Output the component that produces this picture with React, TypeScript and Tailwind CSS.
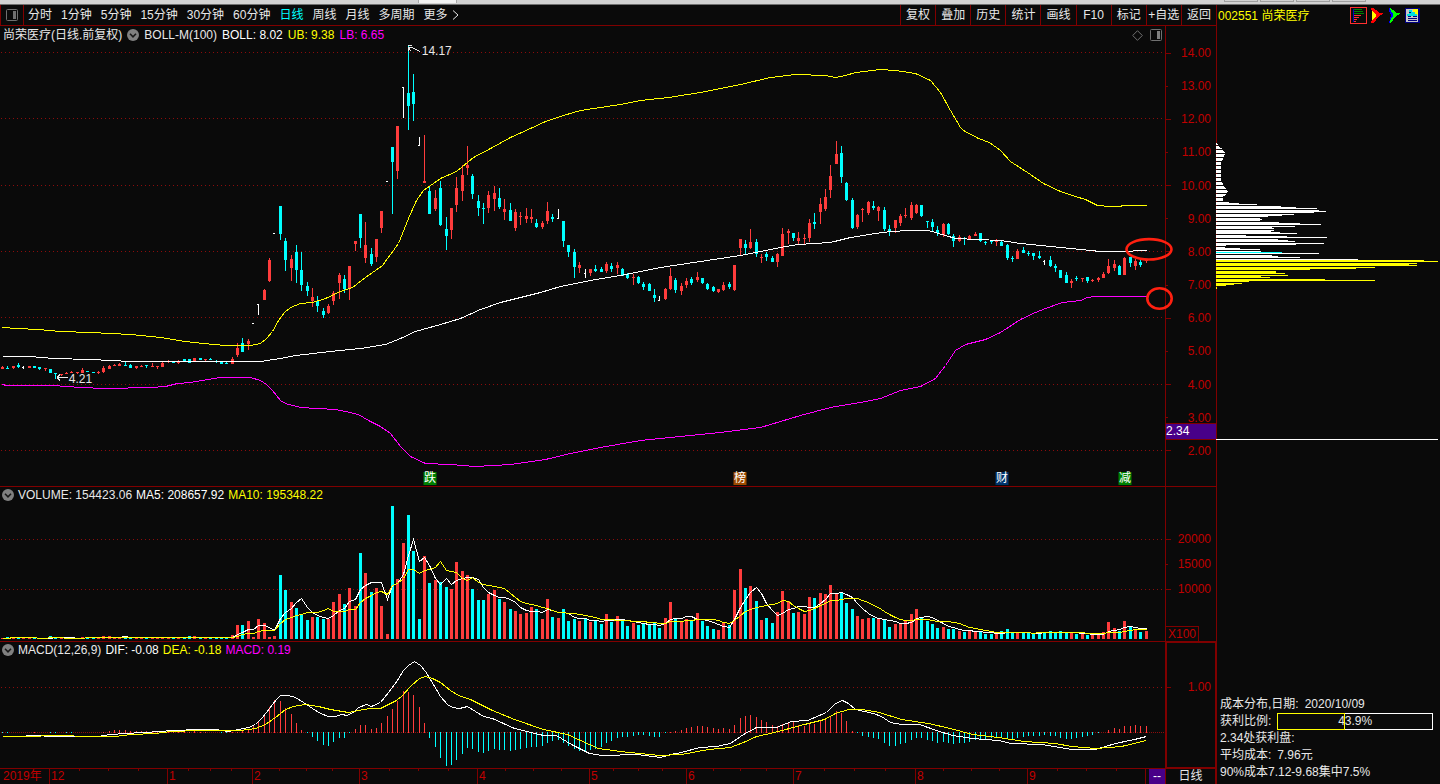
import type { ReactNode } from "react";

type Kind = "r" | "c" | "w" | "v"; // up, down, flat on rising / falling volume
type Candle = [number, number, number, number, Kind];

const RED = "#ff3c3c";
const CYAN = "#00ffff";
const YELLOW = "#ffff00";
const MAGENTA = "#ff00ff";
const WHITE = "#ffffff";
const LINE = "#800000";

// high, body top, body bottom, low, kind (chart units)
const candles: Candle[] = [
  [366, 367, 369, 369, "r"], [366, 368, 369, 369, "c"], [366, 366, 368, 369, "r"], [363, 365, 367, 368, "c"], [366, 367, 368, 369, "w"],
  [366, 366, 368, 368, "r"], [366, 366, 368, 368, "c"], [367, 367, 369, 370, "c"], [368, 368, 369, 371, "r"], [369, 369, 373, 373, "c"],
  [373, 373, 374, 379, "c"], [374, 374, 375, 376, "r"], [372, 373, 374, 374, "r"], [371, 372, 373, 373, "r"], [372, 372, 373, 374, "r"],
  [368, 370, 373, 373, "r"], [371, 371, 372, 372, "c"], [372, 372, 373, 373, "c"], [371, 372, 373, 374, "r"], [366, 368, 372, 373, "r"],
  [365, 366, 369, 369, "r"], [364, 365, 366, 366, "r"], [363, 364, 366, 366, "r"], [362, 365, 366, 366, "c"], [364, 365, 368, 368, "c"],
  [366, 366, 368, 369, "r"], [365, 366, 367, 367, "r"], [365, 365, 366, 368, "c"], [363, 366, 367, 367, "r"], [366, 366, 367, 369, "r"],
  [362, 363, 367, 367, "r"], [360, 361, 362, 363, "r"], [361, 362, 363, 363, "c"], [360, 361, 363, 364, "r"], [359, 359, 361, 361, "c"],
  [359, 359, 363, 363, "c"], [358, 358, 361, 361, "r"], [358, 358, 360, 360, "c"], [359, 359, 360, 361, "r"], [358, 359, 360, 360, "c"],
  [360, 361, 362, 363, "c"], [361, 362, 364, 364, "c"], [362, 363, 364, 364, "c"], [357, 359, 364, 364, "r"], [343, 348, 355, 357, "r"],
  [338, 343, 352, 352, "c"], [339, 341, 344, 350, "r"], [323, 323, 324, 324, "w"], [304, 304, 315, 315, "w"], [289, 290, 300, 300, "r"],
  [258, 260, 281, 282, "r"], [233, 233, 234, 234, "w"], [206, 206, 234, 240, "c"], [238, 241, 260, 271, "c"], [255, 259, 268, 281, "r"],
  [245, 252, 270, 283, "c"], [252, 270, 285, 291, "c"], [282, 286, 291, 296, "c"], [288, 297, 301, 307, "r"], [296, 301, 306, 312, "c"],
  [308, 311, 315, 318, "c"], [304, 306, 313, 314, "r"], [291, 293, 301, 305, "r"], [273, 275, 283, 299, "r"], [275, 279, 289, 293, "c"],
  [266, 266, 289, 300, "r"], [241, 241, 244, 251, "r"], [214, 214, 238, 248, "c"], [222, 245, 258, 263, "r"], [248, 254, 264, 266, "c"],
  [239, 239, 257, 262, "r"], [211, 211, 228, 233, "r"], [181, 181, 182, 182, "w"], [147, 147, 162, 214, "c"], [126, 126, 171, 179, "r"],
  [87, 87, 118, 118, "w"], [46, 93, 106, 130, "c"], [74, 92, 104, 121, "c"], [137, 145, 146, 146, "v"], [135, 181, 183, 183, "r"],
  [186, 191, 214, 214, "c"], [190, 198, 209, 211, "r"], [181, 188, 225, 226, "c"], [217, 229, 236, 250, "c"], [208, 208, 230, 239, "r"],
  [177, 188, 205, 212, "r"], [165, 175, 191, 201, "r"], [146, 165, 168, 175, "r"], [174, 176, 194, 199, "c"], [195, 201, 208, 216, "c"],
  [203, 208, 209, 224, "c"], [191, 195, 208, 213, "r"], [186, 193, 199, 211, "r"], [188, 198, 207, 209, "c"], [199, 209, 212, 220, "r"],
  [203, 210, 221, 221, "c"], [209, 212, 228, 231, "r"], [212, 216, 217, 225, "r"], [208, 216, 219, 223, "r"], [209, 217, 219, 223, "r"],
  [219, 223, 227, 228, "c"], [221, 223, 227, 229, "r"], [202, 211, 221, 224, "r"], [214, 217, 219, 222, "c"], [209, 218, 219, 219, "w"],
  [221, 221, 241, 247, "c"], [245, 245, 252, 257, "c"], [249, 252, 267, 278, "c"], [262, 265, 268, 273, "r"], [269, 273, 274, 278, "v"],
  [269, 269, 273, 276, "r"], [265, 269, 271, 272, "c"], [267, 269, 272, 272, "c"], [262, 264, 271, 273, "r"], [263, 266, 269, 272, "c"],
  [262, 265, 268, 274, "r"], [268, 269, 276, 276, "c"], [273, 274, 278, 279, "c"], [274, 277, 278, 285, "r"], [276, 277, 283, 284, "c"],
  [282, 284, 287, 290, "c"], [283, 284, 291, 291, "c"], [289, 295, 298, 302, "c"], [296, 300, 301, 301, "v"], [288, 289, 299, 300, "r"],
  [268, 276, 289, 290, "r"], [278, 280, 290, 293, "c"], [283, 286, 291, 295, "r"], [278, 281, 285, 288, "r"], [277, 279, 283, 285, "c"],
  [272, 277, 280, 282, "r"], [278, 278, 283, 284, "c"], [283, 284, 289, 290, "c"], [286, 287, 291, 292, "c"], [289, 289, 292, 293, "r"],
  [282, 285, 290, 291, "r"], [282, 284, 287, 289, "c"], [265, 265, 290, 291, "r"], [239, 239, 248, 256, "r"], [240, 244, 248, 255, "c"],
  [229, 242, 248, 249, "r"], [239, 242, 254, 257, "c"], [254, 257, 258, 263, "r"], [252, 254, 257, 261, "c"], [256, 258, 262, 262, "c"],
  [253, 254, 262, 267, "r"], [228, 234, 256, 256, "r"], [229, 231, 233, 244, "r"], [233, 233, 238, 241, "c"], [232, 238, 241, 244, "r"],
  [234, 238, 239, 244, "r"], [219, 223, 238, 242, "r"], [213, 222, 224, 229, "c"], [198, 204, 212, 224, "r"], [189, 197, 209, 211, "r"],
  [165, 176, 190, 198, "r"], [141, 154, 164, 164, "r"], [146, 153, 177, 183, "c"], [182, 183, 200, 201, "c"], [198, 200, 228, 229, "c"],
  [214, 215, 227, 229, "r"], [208, 209, 210, 222, "r"], [201, 202, 213, 215, "r"], [201, 206, 208, 210, "c"], [206, 207, 211, 221, "r"],
  [207, 210, 229, 231, "c"], [225, 229, 232, 236, "c"], [220, 220, 228, 233, "r"], [214, 216, 223, 226, "r"], [208, 215, 216, 218, "r"],
  [202, 205, 218, 220, "r"], [204, 205, 213, 214, "r"], [205, 205, 216, 217, "c"], [221, 221, 222, 228, "c"], [219, 222, 227, 231, "c"],
  [226, 230, 233, 236, "c"], [223, 224, 235, 237, "r"], [223, 224, 234, 235, "c"], [234, 236, 241, 247, "c"], [235, 237, 241, 242, "r"],
  [237, 238, 239, 245, "c"], [235, 236, 239, 240, "r"], [232, 234, 236, 236, "r"], [233, 233, 241, 242, "c"], [241, 242, 243, 245, "c"],
  [240, 241, 242, 244, "c"], [239, 240, 242, 246, "r"], [241, 242, 246, 246, "c"], [244, 245, 258, 260, "c"], [256, 258, 259, 262, "c"],
  [249, 251, 259, 259, "r"], [247, 250, 253, 253, "c"], [251, 253, 254, 256, "c"], [253, 253, 256, 260, "c"], [251, 256, 258, 259, "c"],
  [260, 261, 262, 265, "v"], [256, 260, 266, 267, "c"], [264, 266, 268, 272, "c"], [270, 270, 278, 278, "c"], [272, 275, 283, 283, "c"],
  [279, 281, 283, 288, "r"], [276, 278, 279, 281, "c"], [278, 278, 279, 282, "r"], [277, 277, 281, 283, "c"], [279, 280, 281, 282, "r"],
  [277, 278, 280, 282, "r"], [272, 274, 278, 278, "r"], [259, 266, 273, 274, "r"], [260, 264, 268, 271, "r"], [265, 266, 275, 275, "c"],
  [257, 258, 275, 275, "r"], [257, 257, 263, 267, "c"], [259, 261, 266, 270, "r"], [259, 262, 265, 267, "c"], [260, 260, 261, 263, "r"],
];

const volumes = [
  1, 2, 2, 2, 2, 1, 1, 1, 1, 3, 2, 1, 1, 2, 1, 2, 2, 1, 2, 3, 3, 2, 2, 3, 2, 1, 2, 1, 2, 2,
  2, 2, 1, 2, 2, 3, 3, 2, 2, 1, 2, 2, 2, 4, 14, 14, 18, 2, 20, 16, 2, 3, 64, 49, 37, 31, 25, 19, 22, 22,
  20, 20, 37, 45, 35, 51, 33, 86, 66, 47, 51, 33, 5, 133, 60, 96, 124, 88, 20, 83, 56, 59, 57, 52, 50, 77, 68, 64, 50, 39,
  39, 45, 49, 40, 37, 30, 28, 25, 26, 32, 30, 20, 40, 22, 21, 30, 18, 20, 18, 20, 17, 19, 15, 25, 17, 23, 19, 13, 16, 14,
  16, 15, 16, 11, 21, 37, 21, 17, 20, 18, 26, 18, 13, 10, 9, 16, 14, 49, 70, 51, 53, 38, 19, 21, 16, 27, 48, 38, 26, 27,
  25, 42, 41, 46, 45, 54, 46, 46, 36, 30, 23, 20, 21, 21, 20, 20, 12, 15, 15, 19, 25, 30, 22, 18, 15, 11, 12, 10, 10, 8,
  7, 8, 7, 8, 5, 5, 6, 8, 10, 6, 6, 7, 6, 6, 7, 7, 8, 7, 8, 7, 7, 5, 5, 4, 5, 5, 7, 17, 11, 8, 18, 12, 10, 7, 8,
];

const histogram = [
  -1, -1, 0, 0, 0, 0, 1, 0, 0, -1, -1, 0, -1, -1, 0, 0, 0, 0, 0, 1, 2, 3, 3, 3, 2, 2, 2, 2, 2, 1,
  2, 2, 1, 1, 1, 1, 2, 1, 1, 0, 0, -1, -1, 1, 1, 2, 3, 7, 12, 19, 26, 33, 32, 25, 19, 10, 3, -1, -5, -9,
  -13, -14, -10, -6, -6, -1, 4, 8, 8, 4, 5, 10, 17, 24, 32, 42, 41, 38, 26, 10, -6, -15, -26, -34, -33, -28, -22, -16, -17, -20,
  -21, -19, -17, -18, -18, -19, -18, -17, -16, -15, -15, -14, -11, -9, -8, -11, -14, -17, -19, -19, -18, -17, -15, -11, -9, -6, -5, -5, -4, -3,
  -3, -4, -5, -5, -1, 1, 2, 3, 5, 6, 7, 7, 6, 5, 4, 5, 4, 8, 15, 17, 18, 16, 13, 11, 8, 7, 9, 10, 11, 8,
  7, 9, 9, 12, 13, 17, 22, 20, 12, 2, -1, -4, -5, -6, -7, -11, -14, -14, -12, -11, -8, -6, -6, -8, -9, -11, -10, -11, -12, -11,
  -11, -10, -8, -8, -7, -6, -6, -5, -7, -8, -6, -5, -4, -4, -4, -3, -4, -4, -6, -7, -7, -6, -5, -4, -3, -1, 0, 3, 5, 4, 7, 7, 8, 7, 7,
];

const upperBand =
  "2,327 16,328 38,329 60,331 90,332 130,334 160,337 185,341 203,343 225,345 250,345 260,343 266,338 272,331 278,320 284,312 290,307 300,303 312,302 325,298 340,291 352,287 365,277 382,265 398,243 408,218 416,200 423,190 440,178 456,171 473,157 490,148 510,137 530,128 545,121 563,115 580,110 600,107 620,104 640,100 668,97 700,92 740,84 770,77 795,74 825,75 835,77 845,75 855,72 880,69 895,70 915,73 930,80 940,92 950,110 960,127 963,130 978,138 989,142 1000,150 1010,161 1030,174 1043,183 1060,191 1075,196 1085,199 1097,205 1110,206 1120,206 1122,205 1146,205";
const midBand =
  "2,356 30,356 53,358 90,359 130,361 260,361 280,358 295,355 330,351 360,348 385,344 400,338 415,331 440,324 460,318 480,309 500,302 512,299 540,292 560,286 590,280 620,275 660,267 700,261 740,255 760,251 780,247 797,244 830,242 850,237 875,233 890,231 910,230 928,230 945,235 955,238 1000,240 1020,243 1060,247 1100,251 1130,251 1135,250 1146,250";
const lowerBand =
  "2,384 6,385 52,385 80,387 105,388 150,387 165,386 177,383 190,382 207,379 220,377 250,377 260,380 266,384 272,390 280,400 285,403 300,407 335,409 345,411 358,414 368,420 380,426 390,433 400,446 410,456 425,463 450,464 475,466 510,464 545,459 570,453 600,447 640,440 680,436 720,432 760,427 800,415 830,407 860,402 880,398 900,390 920,386 935,378 945,365 955,350 965,344 985,339 1000,332 1020,319 1035,312 1045,308 1062,302 1080,300 1087,297 1095,296 1146,296";
const dif =
  "2,736 20,736 32,735 55,736 97,736 110,734 125,733 160,731 172,730 200,729 215,729 228,731 238,729 248,727 255,724 262,717 269,708 276,699 280,695 288,695 295,697 303,702 312,708 320,713 328,716 335,716 341,714 347,715 354,711 358,707 366,704 371,706 380,702 388,692 397,680 403,670 408,665 414,661 420,665 425,671 433,684 440,696 447,704 452,707 459,708 467,706 475,711 483,716 492,718 514,728 543,735 556,735 571,744 589,753 602,755 637,754 660,757 670,754 681,752 699,747 716,746 730,743 743,734 756,727 776,727 791,721 807,720 826,712 835,703 842,700 848,703 855,709 873,713 881,716 890,722 901,724 919,724 936,730 952,735 972,738 998,740 1011,743 1042,744 1071,749 1095,749 1115,743 1134,739 1146,736";
const dea =
  "2,736 32,736 50,735 97,736 115,736 130,734 155,733 170,731 200,730 240,730 255,728 265,724 275,717 285,709 293,706 305,704 318,706 330,709 348,712 358,710 370,708 380,708 388,704 396,700 402,695 410,686 419,678 425,676 432,678 440,682 450,690 458,695 470,699 492,710 514,719 543,729 567,734 580,740 598,748 620,751 659,755 681,754 708,749 730,747 743,742 756,736 774,732 800,725 824,719 835,713 848,709 862,709 879,712 901,719 928,723 950,728 972,734 998,737 1024,741 1055,743 1071,746 1095,748 1121,746 1146,740";

// first row, then widths of the consecutive rows
const chipRows: [number, number[]][] = [
  [143, [1, 2]], [146, [3, 4, 6]], [150, [7, 8, 9]], [154, [9, 8, 8]], [158, [7, 7, 6]], [162, [5, 5, 5]], [166, [5, 5, 5]],
  [170, [5, 5, 5]], [174, [5, 5, 5]], [178, [5, 5, 5]], [182, [6, 7, 7]], [186, [8, 9, 10]], [190, [11, 12, 11]], [194, [10, 9, 7]],
  [198, [7, 7, 7]], [202, [13, 23, 41]], [206, [65, 80, 101]], [210, [103, 110, 98]], [214, [78, 66, 52]], [218, [44, 46, 44]],
  [222, [63, 84, 105]], [226, [79, 56, 58]], [230, [58, 55, 64, 81]], [235, [30, 71, 111]], [239, [62, 72, 79]], [243, [108, 80, 10]],
  [247, [9, 24, 44]], [251, [45, 66, 103]], [255, [56, 62, 84]], [259, [142, 208, 222]], [263, [201, 193, 201]], [267, [159, 140, 94]],
  [271, [60, 60, 69]], [275, [72, 45, 54]], [279, [109, 159, 33]], [283, [26, 18, 10]], [287, [1, 1]],
];

const periods = ["分时", "1分钟", "5分钟", "15分钟", "30分钟", "60分钟", "日线", "周线", "月线", "多周期"];
const tools = ["复权", "叠加", "历史", "统计", "画线", "F10", "标记", "+自选", "返回"];
const prices = ["14.00", "13.00", "12.00", "11.00", "10.00", "9.00", "8.00", "7.00", "6.00", "5.00", "4.00", "3.00", "2.00"];
const months = ["12", "1", "2", "3", "4", "5", "6", "7", "8", "9"];
const gridRows = [52, 118, 185, 251, 317, 384, 450];

const tags = [
  { text: "跌", x: 430, className: "bg-[#008000]" },
  { text: "榜", x: 740, className: "bg-[#9c4a00]" },
  { text: "财", x: 1002, className: "bg-[#00346c]" },
  { text: "减", x: 1125, className: "bg-[#008000]" },
];

const barX = (i: number) => Math.round(1.9 + i * 5.345);

function movingAverage(size: number) {
  return volumes
    .map((_, i) => {
      const part = volumes.slice(Math.max(0, i - size + 1), i + 1);
      const mean = part.reduce((a, b) => a + b, 0) / part.length;
      return `${barX(i)},${Math.round(639 - mean)}`;
    })
    .join(" ");
}

function Plot({ top, height, children }: { top: number; height: number; children: ReactNode }) {
  return (
    <svg
      className="block min-h-0 w-full flex-1"
      viewBox={`0 ${top} 1165 ${height}`}
      preserveAspectRatio="none"
      shapeRendering="crispEdges"
      aria-hidden="true"
    >
      {children}
    </svg>
  );
}

function Dotted({ y, step = 4 }: { y: number; step?: number }) {
  return <path d={`M1 ${y + 0.5}H1165`} stroke="#8c0c0c" strokeDasharray={`1 ${step - 1}`} />;
}

function Curve({ points, color }: { points: string; color: string }) {
  return <polyline points={points} transform="translate(0.5 0.5)" fill="none" stroke={color} />;
}

function Collapse({ label }: { label: string }) {
  return (
    <button type="button" aria-label={label} className="flex size-3 items-center justify-center rounded-full bg-[#808080]">
      <svg viewBox="0 0 12 12" className="size-3" fill="none" stroke="#181818" strokeWidth="1.6">
        <path d="M3 4.8l3 3 3-3" />
      </svg>
    </button>
  );
}

function Candles() {
  return (
    <g>
      {candles.map(([high, top, bottom, low, kind], i) => {
        const x = barX(i);
        if (kind === "w" || kind === "v") {
          return (
            <g key={i} fill={WHITE}>
              <rect x={x} y={high} width={1} height={low - high} />
              <rect x={x - 1} y={top} width={1} height={1} />
            </g>
          );
        }
        return (
          <g key={i} fill={kind === "r" ? RED : CYAN}>
            <rect x={x} y={high} width={1} height={low - high} />
            <rect x={x - 1} y={top} width={3} height={bottom - top} />
          </g>
        );
      })}
    </g>
  );
}

function Toolbar() {
  return (
    <header className="flex h-[21px] shrink-0 items-stretch border-b border-[#800000] leading-5">
      <button type="button" aria-label="侧栏" className="flex w-6 items-center justify-center border-x border-[#800000]">
        <svg viewBox="0 0 12 12" className="size-3" fill="none" stroke="#707070">
          <rect x="0.5" y="0.5" width="11" height="11" rx="1" />
          <path d="M7 2h3v8H7z" fill="#707070" stroke="none" />
        </svg>
      </button>
      <nav className="ml-1 flex gap-[9px]">
        {periods.map((name) => (
          <button key={name} type="button" className={name === "日线" ? "text-[#00ffff]" : ""}>
            {name}
          </button>
        ))}
        <button type="button" className="flex items-center gap-1">
          更多
          <svg viewBox="0 0 7 12" className="h-3 w-[7px]" fill="none" stroke="#e8e8e8">
            <path d="M1 1.5L6 6l-5 4.5" />
          </svg>
        </button>
      </nav>
      <div className="ml-auto grid w-[316px] grid-cols-9">
        {tools.map((name) => (
          <button key={name} type="button" className="border-l border-[#800000] text-center whitespace-nowrap">
            {name}
          </button>
        ))}
      </div>
    </header>
  );
}

function PricePanel() {
  return (
    <section className="relative flex min-h-0 flex-[460_1_0px] border-b border-[#800000]">
      <div className="relative flex min-w-0 flex-1 flex-col">
        <div className="flex h-[18px] shrink-0 items-center gap-[5px] pr-[3px] pl-[3px]">
          <h1>尚荣医疗(日线.前复权)</h1>
          <Collapse label="主图指标" />
          <span>BOLL-M(100)</span>
          <span className="text-white">BOLL: 8.02</span>
          <span className="text-[#ffff00]">UB: 9.38</span>
          <span className="text-[#ff00ff]">LB: 6.65</span>
          <button type="button" aria-label="标注" className="ml-auto">
            <svg viewBox="0 0 11 11" className="size-[11px]" fill="none" stroke="#707070">
              <path d="M5.5 0.7l4.8 4.8-4.8 4.8L0.7 5.5z" />
            </svg>
          </button>
          <button type="button" aria-label="窗口" className="ml-[2px]">
            <svg viewBox="0 0 12 12" className="size-3" fill="none" stroke="#707070">
              <rect x="0.5" y="0.5" width="11" height="11" rx="1" />
              <path d="M7 2h3v8H7z" fill="#808080" stroke="none" />
            </svg>
          </button>
        </div>
        <Plot top={44} height={442}>
          {gridRows.map((y) => (
            <Dotted key={y} y={y} />
          ))}
          <Candles />
          <Curve points={upperBand} color={YELLOW} />
          <Curve points={midBand} color={WHITE} />
          <Curve points={lowerBand} color={MAGENTA} />
          <g fill="none" stroke="#e8e8e8">
            <path d="M408.5 50.5V46.5M408 45.5H412M408 47.5H412L416 49.5L420 51.5M408.5 48L411 51" />
            <path d="M57 377.5H68M57 377.5L60 374.5M57 377.5L60 380.5" />
          </g>
        </Plot>
        {/* price callouts and event tags sit on the canvas */}
        <span className="absolute top-[4.2%] left-[36.2%] leading-none">14.17</span>
        <span className="absolute top-[75.4%] left-[5.9%] leading-none">4.21</span>
        {tags.map((tag) => (
          <a
            key={tag.x}
            href={`#event-${tag.x}`}
            className={`absolute bottom-px w-[13px] -translate-x-1/2 text-center leading-[13px] text-white ${tag.className}`}
            style={{ left: `${(tag.x / 1165) * 100}%` }}
          >
            {tag.text}
          </a>
        ))}
      </div>

      <div className="relative flex w-[51px] shrink-0 flex-col justify-between border-l border-[#800000] pt-[17px] pr-[5px] pb-[25px] text-right leading-5 text-[#c00000]">
        {prices.map((price, i) => (
          <div key={price} className="flex items-center justify-between">
            <span className={i % 2 ? "h-px w-[2px] bg-[#800000]" : "h-px w-[5px] bg-[#800000]"} />
            <span>{price}</span>
          </div>
        ))}
        <span className="absolute inset-x-0 bottom-[46px] h-[17px] border-y border-[#800000] bg-[#480088] text-left leading-[15px] text-white">
          2.34
        </span>
      </div>

      <svg
        className="pointer-events-none absolute inset-0 size-full"
        viewBox="0 26 1216 460"
        preserveAspectRatio="none"
        fill="none"
        stroke="#ff2010"
        strokeWidth="2.6"
        aria-hidden="true"
      >
        <ellipse cx="1149" cy="249.3" rx="22.5" ry="10.2" />
        <ellipse cx="1159.5" cy="298.5" rx="12.2" ry="10.2" />
      </svg>
    </section>
  );
}

function VolumePanel() {
  return (
    <section className="flex min-h-0 flex-[154_1_0px] border-b border-[#800000]">
      <div className="flex min-w-0 flex-1 flex-col">
        <div className="flex h-4 shrink-0 items-center gap-1 pl-[2px]">
          <Collapse label="成交量" />
          <span>VOLUME: 154423.06</span>
          <span className="text-white">MA5: 208657.92</span>
          <span className="text-[#ffff00]">MA10: 195348.22</span>
        </div>
        <Plot top={503} height={138}>
          <Dotted y={539} />
          <Dotted y={589} />
          {volumes.map((v, i) => (
            <rect
              key={i}
              x={barX(i) - 1}
              y={639 - v}
              width={3}
              height={v}
              fill={candles[i][4] === "r" || candles[i][4] === "w" ? RED : CYAN}
            />
          ))}
          <Curve points={movingAverage(5)} color={WHITE} />
          <Curve points={movingAverage(10)} color={YELLOW} />
        </Plot>
      </div>
      <div className="flex w-[51px] shrink-0 flex-col border-l border-[#800000] pt-[40px] leading-[25px] text-[#c00000]">
        {["20000", "15000", "10000"].map((label, i) => (
          <div key={label} className="flex items-center justify-between pr-[5px]">
            <span className={i === 1 ? "h-px w-[2px] bg-[#800000]" : "h-px w-[5px] bg-[#800000]"} />
            <span>{label}</span>
          </div>
        ))}
        <span className="mt-auto w-[33px] border-t border-r border-[#800000] pl-[2px] leading-[14px]">X100</span>
      </div>
    </section>
  );
}

function MacdPanel() {
  return (
    <section className="flex min-h-0 flex-[126_1_0px] border-b border-[#800000]">
      <div className="flex min-w-0 flex-1 flex-col">
        <div className="flex h-4 shrink-0 items-center gap-1 pl-[2px]">
          <Collapse label="MACD" />
          <span>MACD(12,26,9)</span>
          <span className="text-white">DIF: -0.08</span>
          <span className="text-[#ffff00]">DEA: -0.18</span>
          <span className="text-[#ff00ff]">MACD: 0.19</span>
        </div>
        <Plot top={658} height={110}>
          <Dotted y={687} />
          <Dotted y={732} step={2} />
          {histogram.map((v, i) => (
            <rect
              key={i}
              x={barX(i)}
              y={v > 0 ? 733 - v : 732}
              width={1}
              height={Math.abs(v)}
              fill={v > 0 ? RED : CYAN}
            />
          ))}
          <Curve points={dif} color={WHITE} />
          <Curve points={dea} color={YELLOW} />
        </Plot>
      </div>
      <div className="w-[51px] shrink-0 border border-l-2 border-[#800000] pt-[34px] pr-1 leading-5 text-[#c00000]">
        <div className="flex items-center justify-between">
          <span className="h-px w-1 bg-[#800000]" />
          <span>1.00</span>
        </div>
      </div>
    </section>
  );
}

function DateAxis() {
  return (
    <footer className="flex h-[15px] shrink-0 leading-[15px]">
      <div className="grid min-w-0 flex-1 grid-cols-[49fr_118fr_85fr_107fr_118fr_112fr_97fr_107fr_122fr_112fr_118fr_4fr] text-[#c00000]">
        <span className="pl-[3px] whitespace-nowrap">2019年</span>
        {months.map((month) => (
          <span key={month} className="relative border-l border-[#800000] pl-px">
            {month}
            <span className="absolute inset-x-0 top-0 flex justify-evenly">
              <i className="h-[2px] w-px bg-[#800000]" />
              <i className="h-[2px] w-px bg-[#800000]" />
              <i className="h-[2px] w-px bg-[#800000]" />
            </span>
          </span>
        ))}
        <span className="border-l border-[#800000]" />
      </div>
      <span className="w-4 bg-[#480088] text-center text-white">--</span>
      <button type="button" className="w-[51px] border-x border-[#800000] text-center">
        日线
      </button>
    </footer>
  );
}

function ChipPanel() {
  return (
    <aside className="flex w-[224px] shrink-0 flex-col">
      <div className="flex h-[21px] shrink-0 items-center border-l border-[#800000] pl-px">
        <h2 className="text-[#ffff00]">002551 尚荣医疗</h2>
        <div className="mr-5 ml-auto flex items-center gap-1">
          <button type="button" aria-label="筹码分布" className="border border-[#ff3030]">
            <svg viewBox="0 0 15 15" className="size-[15px]" shapeRendering="crispEdges">
              <path d="M2 1h1v13H2z" fill="#0000c0" />
              <path d="M3 1h8v1H3zM3 3h9v1H3zM3 5h10v1H3z" fill="#008000" />
              <path d="M3 7h7v1H3zM3 9h5v1H3zM3 11h3v1H3zM3 13h2v1H3z" fill="#ff3030" />
            </svg>
          </button>
          <button type="button" aria-label="火焰山">
            <svg viewBox="0 0 13 15" className="h-[15px] w-[13px]" shapeRendering="crispEdges">
              <path d="M0 0h2l3 2 3 3h4v1l-4 2-3 4-3 3H0l1-4V4z" fill="#ff0000" />
              <path d="M1 3l4 3v2l-4 4z" fill="#ffff00" />
            </svg>
          </button>
          <button type="button" aria-label="活跃度">
            <svg viewBox="0 0 13 15" className="h-[15px] w-[13px]" shapeRendering="crispEdges">
              <path d="M1 0h1l3 4 1 2-1 4-3 5H1l1-4 1-4-2-4z" fill="#0000ff" />
              <path d="M2 0l3 2 3 3h4v1L8 8l-3 4-3 3v-2l3-5V6L3 3z" fill="#00ff00" />
            </svg>
          </button>
          <button type="button" aria-label="设置">
            <svg viewBox="0 0 15 15" className="size-[15px]" shapeRendering="crispEdges">
              <path d="M0 0h15v15H0z" fill="#000080" />
              <path d="M1 1h12v13H1z" fill="#c8c8c8" />
              <path d="M8 1h5v6H9z" fill="#ffff00" />
              <path d="M4 2h3v2h3v2h2v2H2V6h2z" fill="#00e0e0" />
              <path d="M4 4h2v1H4zM3 8h3v1H3zM8 8h4v1H8zM3 10h9v1H3zM3 12h9v1H3z" fill="#000080" />
            </svg>
          </button>
        </div>
      </div>

      <svg
        className="block min-h-0 w-full flex-1"
        viewBox="0 26 224 670"
        preserveAspectRatio="none"
        shapeRendering="crispEdges"
        role="img"
        aria-label="成本分布"
      >
        <rect x={0} y={26} width={1} height={670} fill={LINE} />
        {chipRows.flatMap(([start, widths]) =>
          widths.map((w, i) => {
            const y = start + i;
            const fill = y === 252 ? CYAN : y >= 260 ? YELLOW : WHITE;
            return <rect key={y} x={0} y={y} width={w} height={1} fill={fill} />;
          })
        )}
        <rect x={0} y={439} width={222} height={1} fill={WHITE} />
      </svg>

      <div className="h-[88px] shrink-0 border-l border-[#800000] pl-[3px] leading-[17px] whitespace-nowrap">
        <p className="flex gap-[6px]">
          <span>成本分布,日期:</span>
          <span>2020/10/09</span>
        </p>
        <div className="flex items-center gap-[6px] pr-[7px]">
          <span>获利比例:</span>
          <div className="relative h-[17px] flex-1 border border-white text-center leading-[15px]">
            43.9%
            <span className="absolute -inset-y-px -left-px w-[44%] border border-[#ffff00]" />
          </div>
        </div>
        <p>2.34处获利盘:</p>
        <p className="flex gap-[6px]">
          <span>平均成本:</span>
          <span>7.96元</span>
        </p>
        <p>90%成本7.12-9.68集中7.5%</p>
      </div>
    </aside>
  );
}

export default function App() {
  return (
    <div className="flex h-screen flex-col overflow-hidden bg-[#0a0a0a] font-['Liberation_Sans','Noto_Sans_CJK_SC',sans-serif] text-xs text-[#e8e8e8]">
      <div className="flex h-[5px] shrink-0 border-b border-[#707070] bg-[#d2d2d2]">
        <span className="ml-[29%] h-[3px] w-[39px] border-x border-[#a8a8a8] bg-[#f2f2f2]" />
        <span className="mr-[74px] ml-auto flex gap-[2px]">
          <i className="h-[2px] w-[34px] border border-t-0 border-[#a0a0a0]" />
          <i className="h-[2px] w-[34px] border border-t-0 border-[#a0a0a0]" />
          <i className="h-[2px] w-[34px] border border-t-0 border-[#a0a0a0]" />
          <i className="h-[2px] w-[34px] border border-t-0 border-[#a0a0a0]" />
        </span>
      </div>
      <div className="flex min-h-0 flex-1">
        <main className="flex min-w-0 flex-1 flex-col">
          <Toolbar />
          <PricePanel />
          <VolumePanel />
          <MacdPanel />
          <DateAxis />
        </main>
        <ChipPanel />
      </div>
    </div>
  );
}
